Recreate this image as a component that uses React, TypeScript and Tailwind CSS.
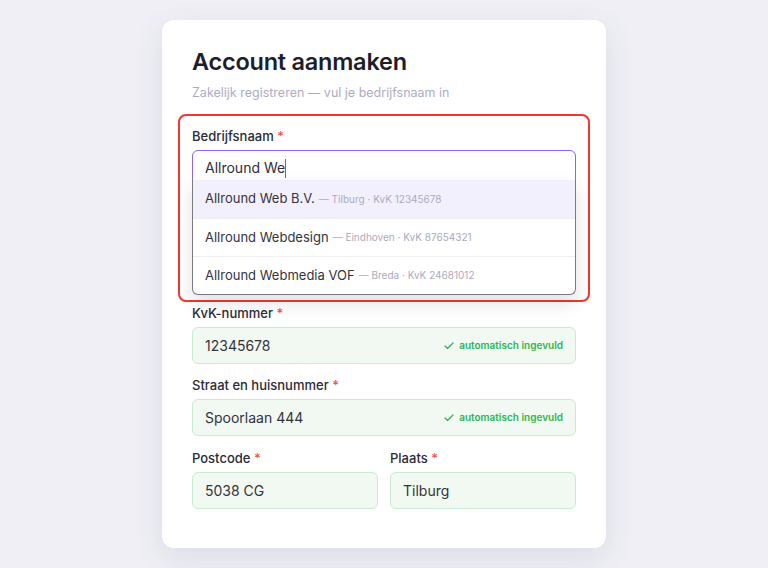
import { Check } from "lucide-react";

interface Suggestion {
  name: string;
  city: string;
  kvk: string;
}

const suggestions: Suggestion[] = [
  { name: "Allround Web B.V.", city: "Tilburg", kvk: "12345678" },
  { name: "Allround Webdesign", city: "Eindhoven", kvk: "87654321" },
  { name: "Allround Webmedia VOF", city: "Breda", kvk: "24681012" },
];

function Label({ children }: { children: React.ReactNode }) {
  return (
    <div className="mb-1 text-[13px] leading-[20px] font-medium text-[#2b2a38]">
      {children} <span className="text-[#f05252]">*</span>
    </div>
  );
}

function FilledInput({ value, auto }: { value: string; auto?: boolean }) {
  return (
    <div className="flex h-[37px] items-center justify-between rounded-md border border-[#c9ebcf] bg-[#f1f9f2] px-3">
      <span className="text-[14px] text-[#34333d]">{value}</span>
      {auto && (
        <span className="flex items-center gap-1 text-[10px] font-semibold text-[#2fb552]">
          <Check className="h-3 w-3" strokeWidth={2.5} />
          automatisch ingevuld
        </span>
      )}
    </div>
  );
}

export default function App() {
  return (
    <div
      className="flex min-h-[568px] justify-center bg-[#efeff5] pt-5"
      style={{ fontFamily: "Inter, 'Noto Sans', sans-serif" }}
    >
      <div className="h-[528px] w-[444px] rounded-xl bg-white px-[30px] pt-[27px] shadow-[0_10px_30px_rgba(90,90,140,0.12)]">
        <h1 className="text-[23.5px] leading-[30px] font-semibold tracking-[-0.01em] text-[#1e1d2b]">Account aanmaken</h1>
        <p className="mt-[6px] text-[12.5px] leading-[20px] text-[#aeacc4]">
          Zakelijk registreren — vul je bedrijfsnaam in
        </p>

        <div className="mt-[11px] -mx-[14px] rounded-lg border-2 border-[#f0382f] px-[12px] pt-[10px] pb-[5px]">
          <Label>Bedrijfsnaam</Label>
          <div className="flex h-[37px] items-start rounded-md border border-[#8b63f5] bg-white px-3 pt-[7px]">
            <span className="text-[14px] leading-[20px] text-[#2f2e38]">Allround We</span>
            <span className="mt-[1px] h-[19px] w-px bg-[#7c4df3]" />
          </div>
          <div className="relative z-10 -mt-[7px] overflow-hidden rounded-b-md border border-[#7a7a80] border-t-0 bg-white shadow-[0_8px_18px_rgba(0,0,0,0.12)]">
            {suggestions.map((s, i) => (
              <div
                key={s.kvk}
                className={`flex h-[38px] items-center gap-1 px-3 ${i === 0 ? "bg-[#f3f0fd]" : "border-t border-[#f0f0f3]"}`}
              >
                <span className="text-[13px] text-[#34333d]">{s.name}</span>
                <span className="text-[10px] text-[#acaabd]">
                  — {s.city} · KvK {s.kvk}
                </span>
              </div>
            ))}
          </div>
        </div>

        <div className="mt-px">
          <Label>KvK-nummer</Label>
          <FilledInput value="12345678" auto />
        </div>
        <div className="mt-[11px]">
          <Label>Straat en huisnummer</Label>
          <FilledInput value="Spoorlaan 444" auto />
        </div>
        <div className="mt-3 grid grid-cols-2 gap-3">
          <div>
            <Label>Postcode</Label>
            <FilledInput value="5038 CG" />
          </div>
          <div>
            <Label>Plaats</Label>
            <FilledInput value="Tilburg" />
          </div>
        </div>
      </div>
    </div>
  );
}
